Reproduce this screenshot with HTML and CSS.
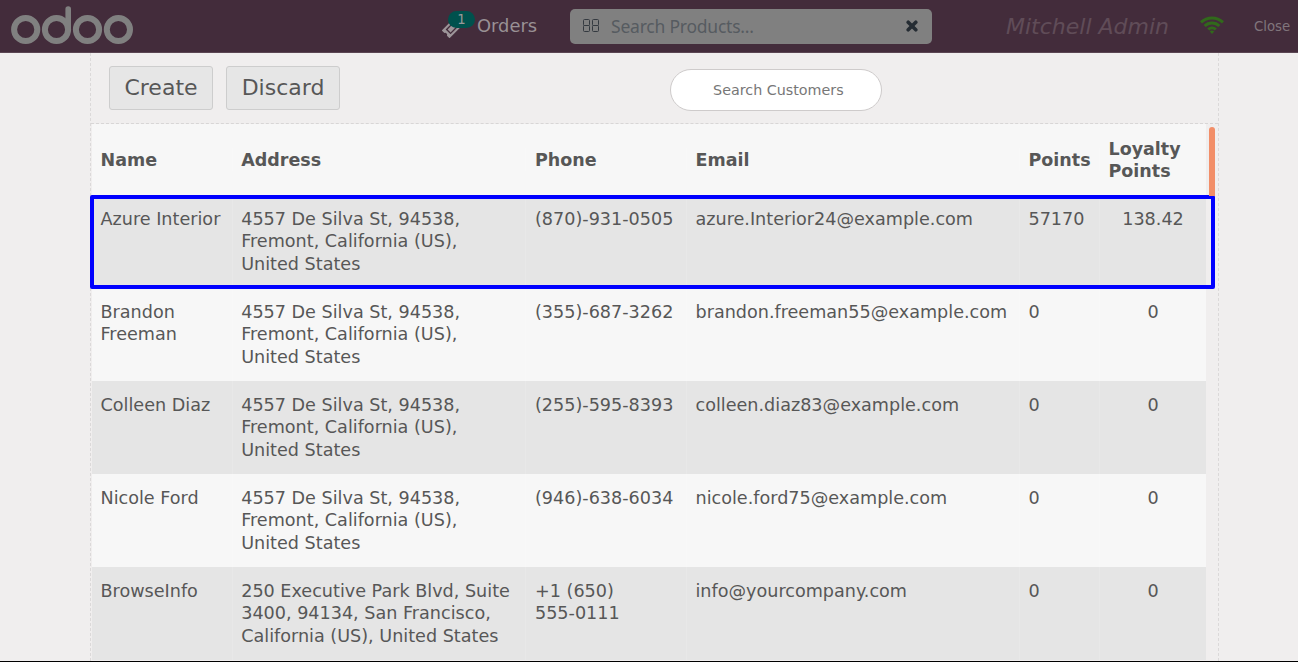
FILE: index.html
```html
<!DOCTYPE html>
<html lang="en">
<head>
<meta charset="utf-8">
<title>Customers</title>
<link rel="stylesheet" href="styles.css">
</head>
<body>
<header class="topbar">
  <svg class="logo" viewBox="0 0 126 42" width="126" height="42" fill="none" stroke="#808080" stroke-width="6">
    <circle cx="15.700" cy="25.500" r="11.600"/><circle cx="46.500" cy="25.500" r="11.600"/><circle cx="77.500" cy="25.500" r="11.600"/><circle cx="108.400" cy="25.500" r="11.600"/>
    <path d="M58.200 25V5" stroke-linecap="round" stroke-width="5.600"/>
  </svg>
  <div class="orders">
    <svg class="ticket" viewBox="0 0 20 20" width="20" height="20">
      <g transform="rotate(-45 10 10)"><path fill="#9d9599" d="M1 4.500h18v3.700a1.900 1.900 0 0 0 0 3.600v3.700H1v-3.700a1.900 1.900 0 0 0 0-3.600z"/><path fill="none" stroke="#432c3b" stroke-width="1.400" d="M5.200 7.200h9.600v5.600H5.200z"/></g>
    </svg>
    <span class="badge">1</span>
    <span class="orders-label">Orders</span>
  </div>
  <div class="product-search">
    <svg class="grid-icon" viewBox="0 0 16 14" width="16" height="14" fill="none" stroke="#343a40" stroke-width="1"><rect x=".5" y=".5" width="6" height="6" rx="1"/><rect x="9.500" y=".5" width="6" height="6" rx="1"/><rect x=".5" y="6.500" width="6" height="6" rx="1"/><rect x="9.500" y="6.500" width="6" height="6" rx="1"/></svg>
    <span class="product-placeholder">Search Products...</span>
    <svg class="clear-icon" viewBox="0 0 12 12" width="12" height="12"><path d="M2.200 2.200l7.600 7.600M9.800 2.200l-7.600 7.600" stroke="#252c33" stroke-width="3.600" stroke-linecap="round"/></svg>
  </div>
  <span class="user">Mitchell Admin</span>
  <svg class="wifi" viewBox="0 0 24 18" width="24" height="18" fill="none" stroke="#31691b" stroke-width="3"><path d="M1 6.400a15.800 15.800 0 0 1 22 0M4.600 10a10.700 10.700 0 0 1 14.800 0M8.200 13.500a5.600 5.600 0 0 1 7.600 0"/><path d="M9.700 15.500a3.300 3.300 0 0 1 4.600 0L12 17.900z" fill="#31691b" stroke="none"/></svg>
  <span class="close">Close</span>
</header>
<main class="panel">
  <div class="toolbar">
    <button class="btn btn-create">Create</button>
    <button class="btn btn-discard">Discard</button>
    <div class="customer-search">Search Customers</div>
  </div>
  <div class="list">
    <div class="row head"><span>Name</span><span>Address</span><span>Phone</span><span>Email</span><span>Points</span><span>Loyalty<br>Points</span></div>
    <div class="row odd selected"><span>Azure Interior</span><span>4557 De Silva St, 94538,<br>Fremont, California (US),<br>United States</span><span>(870)-931-0505</span><span>azure.Interior24@example.com</span><span>57170</span><span class="loyalty">138.42</span></div>
    <div class="row"><span>Brandon<br>Freeman</span><span>4557 De Silva St, 94538,<br>Fremont, California (US),<br>United States</span><span>(355)-687-3262</span><span>brandon.freeman55@example.com</span><span>0</span><span class="loyalty">0</span></div>
    <div class="row odd"><span>Colleen Diaz</span><span>4557 De Silva St, 94538,<br>Fremont, California (US),<br>United States</span><span>(255)-595-8393</span><span>colleen.diaz83@example.com</span><span>0</span><span class="loyalty">0</span></div>
    <div class="row"><span>Nicole Ford</span><span>4557 De Silva St, 94538,<br>Fremont, California (US),<br>United States</span><span>(946)-638-6034</span><span>nicole.ford75@example.com</span><span>0</span><span class="loyalty">0</span></div>
    <div class="row odd"><span>BrowseInfo</span><span>250 Executive Park Blvd, Suite<br>3400, 94134, San Francisco,<br>California (US), United States</span><span>+1 (650)<br>555-0111</span><span>info@yourcompany.com</span><span>0</span><span class="loyalty">0</span></div>
    <div class="scrollbar"></div>
  </div>
</main>
</body>
</html>
```
FILE: styles.css
```css
*, *::after { box-sizing: border-box; }
body {
  margin: 0;
  height: 662px;
  overflow: hidden;
  display: flex;
  flex-direction: column;
  background: #f0eeee;
  border-bottom: 1px solid #000;
  color: #575757;
  font-family: "DejaVu Sans", sans-serif;
}
.topbar {
  flex: none;
  height: 53px;
  display: flex;
  align-items: center;
  background: #432c3b;
  border-bottom: 1px solid #5b4653;
  padding-left: 10px;
  white-space: nowrap;
}
.logo { flex: none; margin-top: -3px; }
.orders {
  position: relative;
  display: flex;
  align-items: center;
  width: 128px;
  margin: -1px 0 0 306px;
  color: #999195;
}
.ticket { margin: 5px 0 0; }
.badge {
  position: absolute;
  left: 6px;
  top: -2px;
  width: 27px;
  height: 17px;
  border-radius: 9px;
  background: #00514d;
  color: #999;
  font-size: 13.2px;
  line-height: 18px;
  text-align: center;
}
.orders-label { margin-left: 15px; font-size: 17.9px; }
.product-search {
  display: flex;
  align-items: center;
  width: 362px;
  height: 35px;
  padding: 0 14px 0 13px;
  border-radius: 5px;
  background: #808080;
}
.product-placeholder {
  margin-left: 12px;
  color: #565b60;
  font-family: "Noto Sans", sans-serif;
  font-size: 17.5px;
  letter-spacing: -0.22px;
}
.clear-icon { margin-left: auto; }
.user {
  width: 162px;
  margin-left: 74px;
  color: #604c58;
  font-size: 22px;
  font-style: italic;
}
.wifi { margin: -2px 0 0 32px; }
.close { margin-left: 30px; color: #80757b; font-size: 13.3px; }
.panel {
  flex: 1;
  min-height: 0;
  width: 1129px;
  margin-left: 90px;
  border: 1px dashed #dbd9d9;
  border-width: 0 1px;
}
.toolbar {
  display: flex;
  height: 71px;
  padding: 13px 0 0 18px;
  border-bottom: 1px dashed #d8d6d6;
}
.btn {
  height: 44px;
  padding: 0 0 2px;
  border: 1px solid #cdcdcd;
  border-radius: 3px;
  background: #e6e6e6;
  color: #575757;
  font-family: inherit;
  font-size: 22px;
}
.btn-create { width: 104px; }
.btn-discard { width: 114px; margin-left: 13px; }
.customer-search {
  width: 212px;
  height: 42px;
  margin: 3px 0 0 330.4px;
  padding-left: 4px;
  border: 1px solid #cecbcb;
  border-radius: 21px;
  background: #fff;
  color: #777;
  font-size: 14.3px;
  line-height: 40px;
  text-align: center;
}
.list { position: relative; padding-left: 1px; }
.row {
  display: grid;
  grid-template-columns: 140.7px 293.8px 160.5px 333px 80px 106px;
  width: 1114px;
  height: 93px;
  background: #f7f7f7;
  font-size: 17.6px;
  line-height: 22.5px;
  white-space: nowrap;
}
.row > span { padding: 12.6px 0 0 8.5px; border-right: 1px solid #f8f8f8; }
.row.odd { background: #e5e5e5; }
.row.odd > span { border-color: #e8e8e8; }
.row > span:last-child { border-right: 0; }
.row > .loyalty { padding-left: 0; text-align: center; }
.row.head { height: 71px; align-items: center; font-weight: bold; font-size: 17.5px; }
.row.head > span { padding-top: 1px; }
.selected { position: relative; }
.selected::after {
  content: "";
  position: absolute;
  left: -2px;
  top: 0;
  width: 1125px;
  height: 94px;
  border: 4px solid #0000ff;
  border-radius: 2px;
}
.scrollbar {
  position: absolute;
  left: 1118px;
  top: 3px;
  width: 6px;
  height: 69px;
  border-radius: 3px 3px 0 0;
  background: #f28e68;
}
```
